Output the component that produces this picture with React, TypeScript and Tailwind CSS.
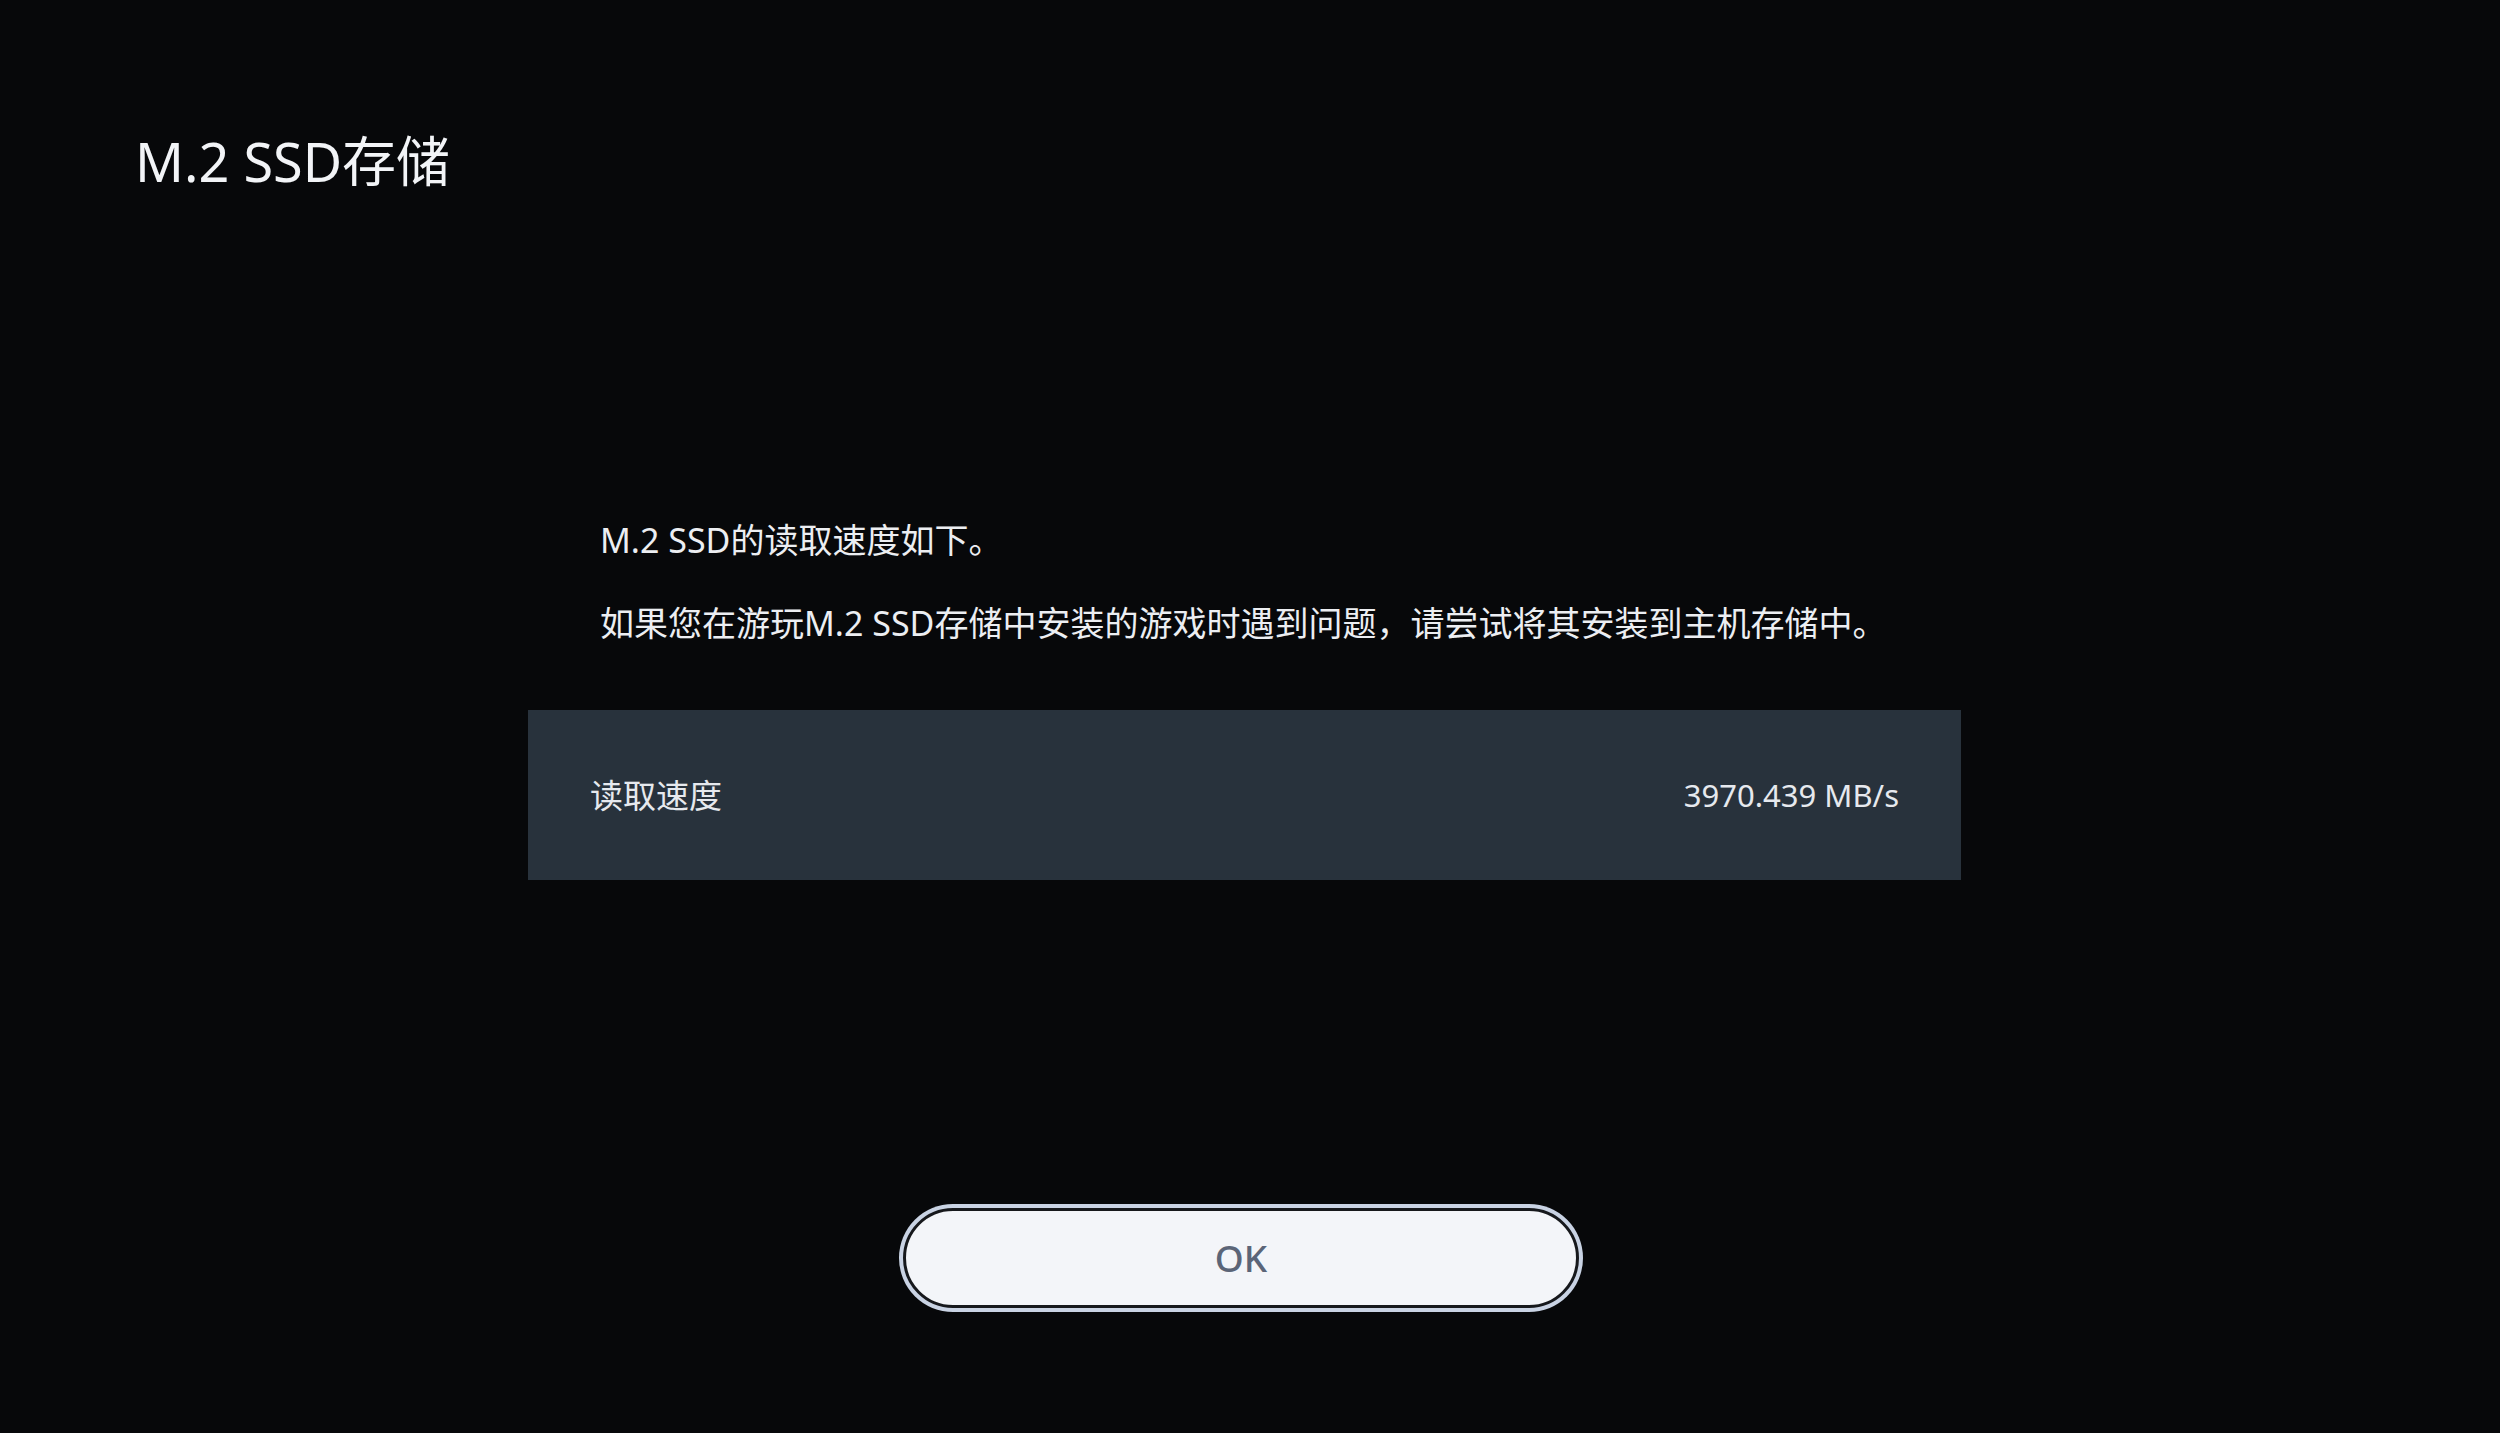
const FONT = { fontFamily: '"Noto Sans", "Noto Sans CJK SC", sans-serif' };

export default function App() {
  return (
    <div
      style={FONT}
      className="flex h-[1433px] w-[2500px] flex-col overflow-hidden bg-[#07080a] text-[#eef0f4]"
    >
      {/* Header */}
      <h1 className="pl-[135px] pt-[129px] text-[54px] font-normal leading-[65px] text-[#f2f4f7]">
        M.2 SSD存储
      </h1>

      {/* Content column */}
      <div className="ml-[528px] mt-[322px] flex w-[1433px] flex-col">
        <div className="flex flex-col gap-[35px] pl-[72px] text-[34px] leading-[48px] text-[#eceef2]">
          <p>M.2 SSD的读取速度如下。</p>
          <p>如果您在游玩M.2 SSD存储中安装的游戏时遇到问题，请尝试将其安装到主机存储中。</p>
        </div>

        <div className="mt-[63px] flex h-[170px] items-center justify-between bg-[#28323c] px-[62px] text-[#e6e9ee]">
          <span className="text-[33px] leading-none">读取速度</span>
          <span className="text-[31px] leading-none">3970.439 MB/s</span>
        </div>

        <div className="ml-[371px] mt-[324px] h-[108px] w-[684px] rounded-full bg-[#c9d3e4] p-[4px]">
          <button className="flex h-full w-full items-center justify-center rounded-full border-[3px] border-[#16181c] bg-[#f3f5f9] text-[37px] font-medium text-[#5b6578]">
            OK
          </button>
        </div>
      </div>
    </div>
  );
}
